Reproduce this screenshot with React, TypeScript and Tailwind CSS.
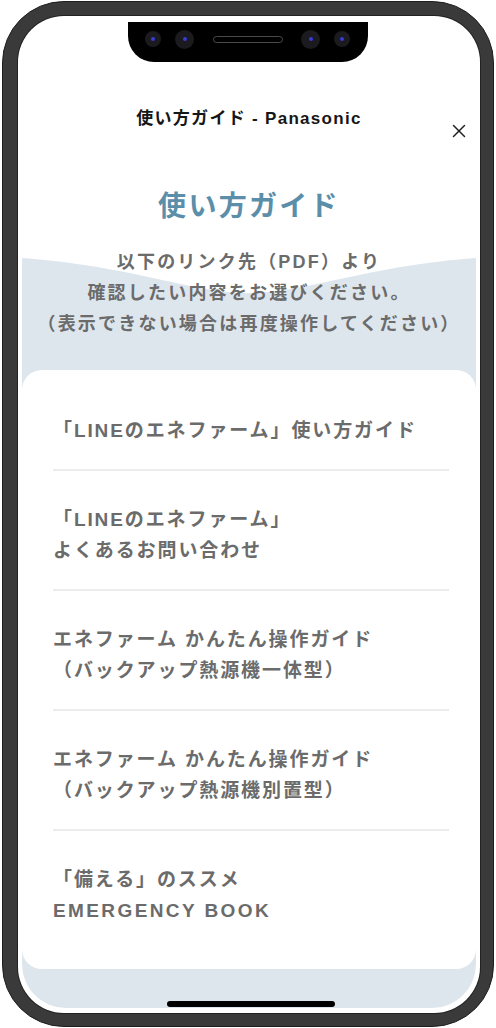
import { X } from "lucide-react";

const items = [
  ["「LINEのエネファーム」使い方ガイド"],
  ["「LINEのエネファーム」", "よくあるお問い合わせ"],
  ["エネファーム かんたん操作ガイド", "（バックアップ熱源機一体型）"],
  ["エネファーム かんたん操作ガイド", "（バックアップ熱源機別置型）"],
  ["「備える」のススメ", "EMERGENCY BOOK"],
];

function Notch() {
  return (
    <div className="absolute left-[110px] top-[6px] h-[40px] w-[240px] rounded-b-[26px] bg-black">
      <div className="flex h-[34px] items-center">
        <div className="ml-[17px] flex h-[16px] w-[16px] items-center justify-center rounded-full bg-[#1b1b1f]">
          <div className="h-[4px] w-[4px] rounded-full bg-[#3a3ad8]" />
        </div>
        <div className="ml-[14px] flex h-[19px] w-[19px] items-center justify-center rounded-full bg-[#1b1b1f]">
          <div className="h-[4px] w-[4px] rounded-full bg-[#3a3ad8]" />
        </div>
        <div className="ml-[19px] h-[7px] w-[70px] rounded-full border border-[#4a4a4a]" />
        <div className="ml-[18px] flex h-[19px] w-[19px] items-center justify-center rounded-full bg-[#1b1b1f]">
          <div className="h-[4px] w-[4px] rounded-full bg-[#3a3ad8]" />
        </div>
        <div className="ml-[14px] flex h-[16px] w-[16px] items-center justify-center rounded-full bg-[#1b1b1f]">
          <div className="h-[4px] w-[4px] rounded-full bg-[#3a3ad8]" />
        </div>
      </div>
    </div>
  );
}

export default function App() {
  return (
    <div className="h-[1028px] w-[496px] bg-white font-['Liberation_Sans','Noto_Sans_CJK_JP',sans-serif]">
      <div className="ml-[2px] mt-[1px] h-[1026px] w-[492px] rounded-[62px] border border-[#1e1e1e] bg-[#3a3a3a] pb-[13px] pl-[15px] pr-[13px] pt-[14px]">
        <div className="relative flex h-full flex-col overflow-hidden rounded-[46px] bg-white ring-1 ring-[#222]">
          <Notch />

          {/* ヘッダー */}
          <div className="relative mt-[88px] h-[30px] text-center text-[17px] font-bold leading-[30px] tracking-[1.3px] text-[#161616]">
            使い方ガイド - Panasonic
            <X className="absolute right-[10px] top-[16px] h-[22px] w-[22px] text-[#222]" strokeWidth={1.6} />
          </div>

          <h1 className="mt-[53px] text-center text-[28px] font-bold leading-[40px] tracking-[2.3px] text-[#5b8ea9]">
            使い方ガイド
          </h1>

          <div className="relative mx-[4px] mt-[20px] flex-1 rounded-b-[44px] bg-[#dee6ed] pb-[39px]">
            <svg className="absolute left-0 top-0" width="454" height="50" viewBox="0 0 454 50">
              <path d="M0 0 H454 V11 C344 19 284 46 227 46 C170 46 110 19 0 11 Z" fill="#fff" />
            </svg>

            <p className="relative text-center text-[18px] font-bold leading-[31px] tracking-[2.2px] text-[#6b6b6b]">
              以下のリンク先（PDF）より
              <br />
              確認したい内容をお選びください。
              <br />
              （表示できない場合は再度操作してください）
            </p>

            <div className="mt-[30px] rounded-[20px] bg-white pb-[20px] pt-[12px]">
              {items.map((lines, i) => (
                <div key={i}>
                  {i > 0 && <div className="ml-[31px] mr-[27px] h-[2px] bg-[#ececec]" />}
                  <div className="ml-[31px] pb-[23px] pt-[33px] text-[19px] font-bold leading-[31px] tracking-[1.9px] text-[#6b6b6b]">
                    {lines.map((l, j) => (
                      <div key={j} className={l === "EMERGENCY BOOK" ? "tracking-[2.4px]" : ""}>
                        {l}
                      </div>
                    ))}
                  </div>
                </div>
              ))}
            </div>
          </div>
          <div className="h-[5px]" />

          <div className="absolute bottom-[6px] left-[149px] h-[6px] w-[168px] rounded-full bg-black" />
        </div>
      </div>
    </div>
  );
}
